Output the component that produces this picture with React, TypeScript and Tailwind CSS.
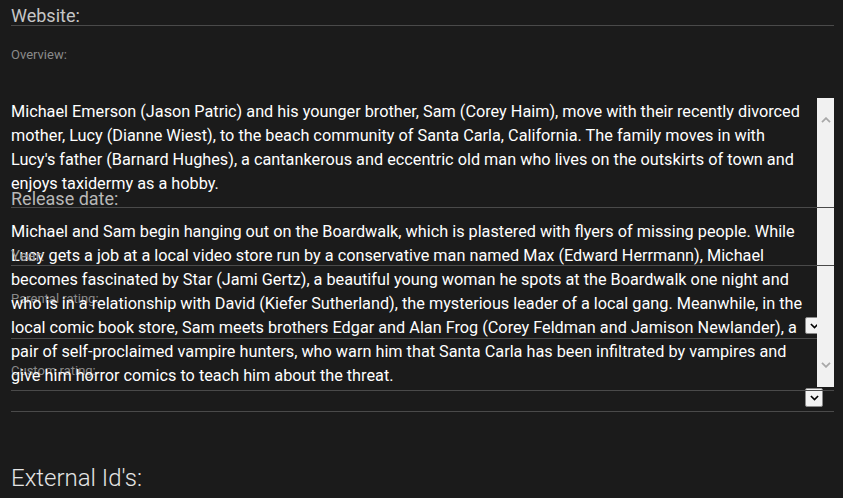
const OVERVIEW = `Michael Emerson (Jason Patric) and his younger brother, Sam (Corey Haim), move with their recently divorced mother, Lucy (Dianne Wiest), to the beach community of Santa Carla, California. The family moves in with Lucy's father (Barnard Hughes), a cantankerous and eccentric old man who lives on the outskirts of town and enjoys taxidermy as a hobby.

Michael and Sam begin hanging out on the Boardwalk, which is plastered with flyers of missing people. While Lucy gets a job at a local video store run by a conservative man named Max (Edward Herrmann), Michael becomes fascinated by Star (Jami Gertz), a beautiful young woman he spots at the Boardwalk one night and who is in a relationship with David (Kiefer Sutherland), the mysterious leader of a local gang. Meanwhile, in the local comic book store, Sam meets brothers Edgar and Alan Frog (Corey Feldman and Jamison Newlander), a pair of self-proclaimed vampire hunters, who warn him that Santa Carla has been infiltrated by vampires and give him horror comics to teach him about the threat.`;

function Chevron({ up, className }: { up?: boolean; className?: string }) {
  return (
    <svg viewBox="0 0 10 6" className={className} fill="none" stroke="currentColor" strokeWidth={1.8}>
      <path d={up ? "M1 5.2 L5 1.2 L9 5.2" : "M1 0.8 L5 4.8 L9 0.8"} />
    </svg>
  );
}

function SelectBox({ h }: { h: string }) {
  return (
    <div className={`w-[18px] ${h} mr-[11px] bg-[#f3f3f3] border border-[#8a8a8a] rounded-[2px] flex items-center justify-center text-black`}>
      <Chevron className="w-[9px] h-[6px]" />
    </div>
  );
}

export default function App() {
  return (
    <div className="h-[498px] overflow-hidden bg-[#1b1b1b] font-['Roboto',sans-serif]">
      <div className="relative pl-[11px] pr-[9px]">
        {/* Website */}
        <div className="h-[26px] pt-[5px] border-b border-[#4a4a4a] text-[18px] leading-[22px] text-[#c6c6c6]">
          Website:
        </div>

        {/* Overview label */}
        <div className="mt-[22px] text-[13px] leading-[14px] text-[#8a8a8a]">Overview:</div>

        {/* Release date */}
        <div className="relative z-20 mt-[127px] h-[19px] border-b border-[#4a4a4a] text-[18px] leading-[20px] text-[#b8b8b8]">
          Release date:
        </div>

        {/* Year */}
        <div className="relative z-20 mt-[38px] h-[20px] border-b border-[#4a4a4a] text-[15px] leading-[20px] text-[#9a9a9a]">
          Year:
        </div>

        {/* Parental rating */}
        <div className="mt-[26px] text-[13px] leading-[14px] text-[#8a8a8a]">Parental rating:</div>
        <div className="mt-[11px] h-[22px] border-b border-[#4a4a4a] flex justify-end items-start">
          <SelectBox h="h-[17px]" />
        </div>

        {/* Custom rating */}
        <div className="mt-[25px] text-[13px] leading-[14px] text-[#8a8a8a]">Custom rating:</div>
        <div className="mt-[10px] h-[24px] border-b border-[#4a4a4a] flex justify-end items-start">
          <SelectBox h="h-[19px]" />
        </div>

        {/* External ids */}
        <div className="mt-[51px] text-[24px] leading-[30px] font-light text-[#e4e4e4]">External Id's:</div>

        {/* Overview textarea, overflowing over the fields below */}
        <div className="absolute z-10 left-[11px] right-[9px] top-[98px] h-[293px] border-b border-[#4a4a4a]">
          <div className="pt-[2px] w-[800px] whitespace-pre-wrap text-white text-[16.25px] leading-[24px]">
            {OVERVIEW}
          </div>
          <div className="absolute right-0 top-0 w-[17px] h-[289px] bg-[#f1f1f1] flex flex-col items-center justify-between py-[19px] text-[#a8a8a8]">
            <Chevron up className="w-[10px] h-[6px]" />
            <Chevron className="w-[10px] h-[6px]" />
          </div>
        </div>
      </div>
    </div>
  );
}
